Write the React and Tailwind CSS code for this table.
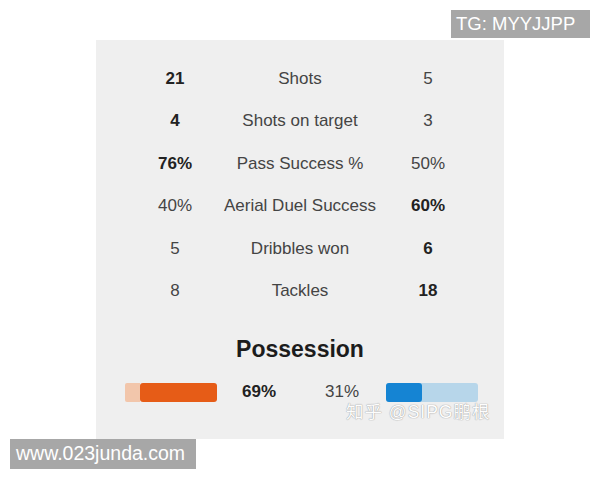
import React from 'react';

const stats = [
	{ home: '21', label: 'Shots', away: '5', lead: 'home' },
	{ home: '4', label: 'Shots on target', away: '3', lead: 'home' },
	{ home: '76%', label: 'Pass Success %', away: '50%', lead: 'home' },
	{ home: '40%', label: 'Aerial Duel Success', away: '60%', lead: 'away' },
	{ home: '5', label: 'Dribbles won', away: '6', lead: 'away' },
	{ home: '8', label: 'Tackles', away: '18', lead: 'away' },
];

export default function App() {
	return (
		<div className="relative w-[600px] h-[480px] bg-white overflow-hidden font-['Liberation_Sans',Arial,sans-serif]">
			<div className="relative mx-auto mt-[40px] w-[408px] h-[399px] bg-[#efefef]">
				<div className="pt-[17px] pl-[39px] grid grid-cols-[80px_170px_86px]">
					{stats.map((s) => (
						<React.Fragment key={s.label}>
							<div
								className={`h-[42.5px] flex items-center justify-center text-[17px] ${
									s.lead === 'home' ? 'font-bold text-[#222]' : 'text-[#444]'
								}`}
							>
								{s.home}
							</div>
							<div className="h-[42.5px] flex items-center justify-center text-[17px] text-[#444] whitespace-nowrap">
								{s.label}
							</div>
							<div
								className={`h-[42.5px] flex items-center justify-center text-[17px] ${
									s.lead === 'away' ? 'font-bold text-[#222]' : 'text-[#444]'
								}`}
							>
								{s.away}
							</div>
						</React.Fragment>
					))}
				</div>

				<div className="mt-[24px] text-center text-[23px] leading-[26px] font-bold text-[#1c1c1c]">
					Possession
				</div>

				<div className="mt-[20px] pl-[29px] flex items-center h-[20px]">
					<div className="flex w-[92px] h-[19px]">
						<div className="w-[15px] bg-[#f2c6ab] rounded-l-[2px]" />
						<div className="flex-1 bg-[#e65c17] rounded-[3px]" />
					</div>
					<div className="ml-[25px] text-[17px] font-bold text-[#222]">69%</div>
					<div className="ml-[49px] text-[17px] text-[#444]">31%</div>
					<div className="ml-[27px] flex w-[92px] h-[19px] bg-[#b7d6ea] rounded-[3px]">
						<div className="w-[36px] bg-[#1584d3] rounded-[3px]" />
					</div>
				</div>

				<div className="absolute left-[250px] top-[359px] text-[17.5px] text-white font-['Liberation_Sans','Noto_Sans_CJK_SC',sans-serif] [text-shadow:0_0_1px_#9a9a9a,0_0_1px_#9a9a9a] opacity-90 tracking-[1px]">
					知乎 @SIPG鹏根
				</div>
			</div>

			<div className="absolute left-[451px] top-[10px] w-[139px] h-[28px] bg-[#a7a7a7] pl-[5px] flex items-center text-white text-[18.5px] whitespace-nowrap">
				TG: MYYJJPP
			</div>
			<div className="absolute left-[10px] top-[439px] w-[186px] h-[30px] bg-[#a7a7a7] pl-[6px] flex items-center text-white text-[19.5px] whitespace-nowrap">
				www.023junda.com
			</div>
		</div>
	);
}
